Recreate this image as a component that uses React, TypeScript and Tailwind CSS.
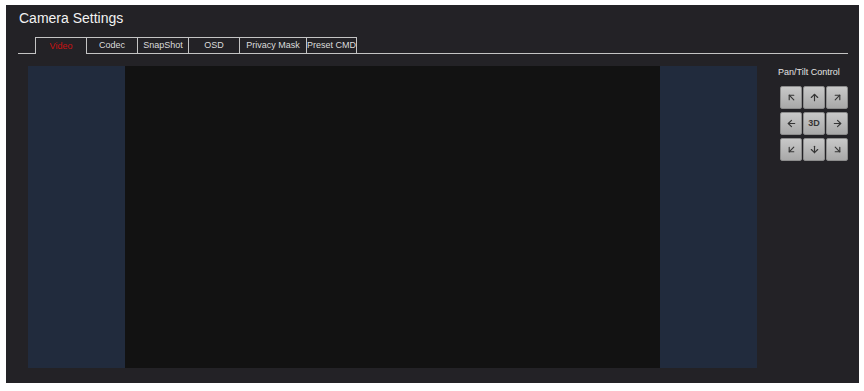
import {
  ArrowUpLeft,
  ArrowUp,
  ArrowUpRight,
  ArrowLeft,
  ArrowRight,
  ArrowDownLeft,
  ArrowDown,
  ArrowDownRight,
} from "lucide-react";

const tabs = [
  { label: "Video", width: "w-[51px]", active: true },
  { label: "Codec", width: "w-[51px]" },
  { label: "SnapShot", width: "w-[51px]" },
  { label: "OSD", width: "w-[51px]" },
  { label: "Privacy Mask", width: "w-[67px]" },
  { label: "Preset CMD", width: "w-[51px]" },
];

const PtzButton = ({ children }: { children: React.ReactNode }) => (
  <button
    type="button"
    className="w-[22px] h-[23px] flex items-center justify-center rounded-[2px] border border-[#8c8c8c] bg-gradient-to-b from-[#c8c8c8] to-[#a8a8a8] text-[#353535]"
  >
    {children}
  </button>
);

const App = () => {
  const icon = { size: 11, strokeWidth: 2.5 };
  return (
    <div
      className="w-[864px] h-[391px] bg-white pl-[6px] pt-[5px]"
      style={{ fontFamily: '"Liberation Sans", Arial, sans-serif' }}
    >
      <div className="w-[853px] h-[378px] bg-[#232226] flex flex-col">
        <h1 className="pl-[13px] pt-[5px] text-[14px] leading-4 text-[#f2f2f2]">
          Camera Settings
        </h1>

        <div className="mt-[11px] ml-[12px] w-[830px] h-[17px] flex items-end pl-[17px] border-b border-[#c4c4c4]">
          {tabs.map((t, i) => (
            <div
              key={t.label}
              className={`${t.width} flex items-center justify-center border-t border-l border-[#c4c4c4] text-[9px] leading-none whitespace-nowrap ${
                i === tabs.length - 1 ? "border-r" : ""
              } ${
                t.active
                  ? "h-[17px] -mb-px bg-[#232226] text-[#c81212]"
                  : "h-[16px] text-[#dcdcdc]"
              }`}
            >
              {t.label}
            </div>
          ))}
        </div>

        <div className="flex mt-[12px]">
          <div className="ml-[22px] h-[302px] flex">
            <div className="w-[97px] bg-[#212b3d]" />
            <div className="w-[535px] bg-[#121212]" />
            <div className="w-[97px] bg-[#212b3d]" />
          </div>

          <div className="ml-[21px] flex flex-col">
            <div className="pt-[1px] text-[9px] leading-[11px] text-[#e4e4e4] whitespace-nowrap">
              Pan/Tilt Control
            </div>
            <div className="mt-[8px] ml-[2px] grid grid-cols-[22px_22px_22px] gap-x-[1px] gap-y-[3px]">
              <PtzButton>
                <ArrowUpLeft {...icon} />
              </PtzButton>
              <PtzButton>
                <ArrowUp {...icon} />
              </PtzButton>
              <PtzButton>
                <ArrowUpRight {...icon} />
              </PtzButton>
              <PtzButton>
                <ArrowLeft {...icon} />
              </PtzButton>
              <PtzButton>
                <span className="text-[9px] font-bold leading-none">3D</span>
              </PtzButton>
              <PtzButton>
                <ArrowRight {...icon} />
              </PtzButton>
              <PtzButton>
                <ArrowDownLeft {...icon} />
              </PtzButton>
              <PtzButton>
                <ArrowDown {...icon} />
              </PtzButton>
              <PtzButton>
                <ArrowDownRight {...icon} />
              </PtzButton>
            </div>
          </div>
        </div>
      </div>
    </div>
  );
};

export default App;
